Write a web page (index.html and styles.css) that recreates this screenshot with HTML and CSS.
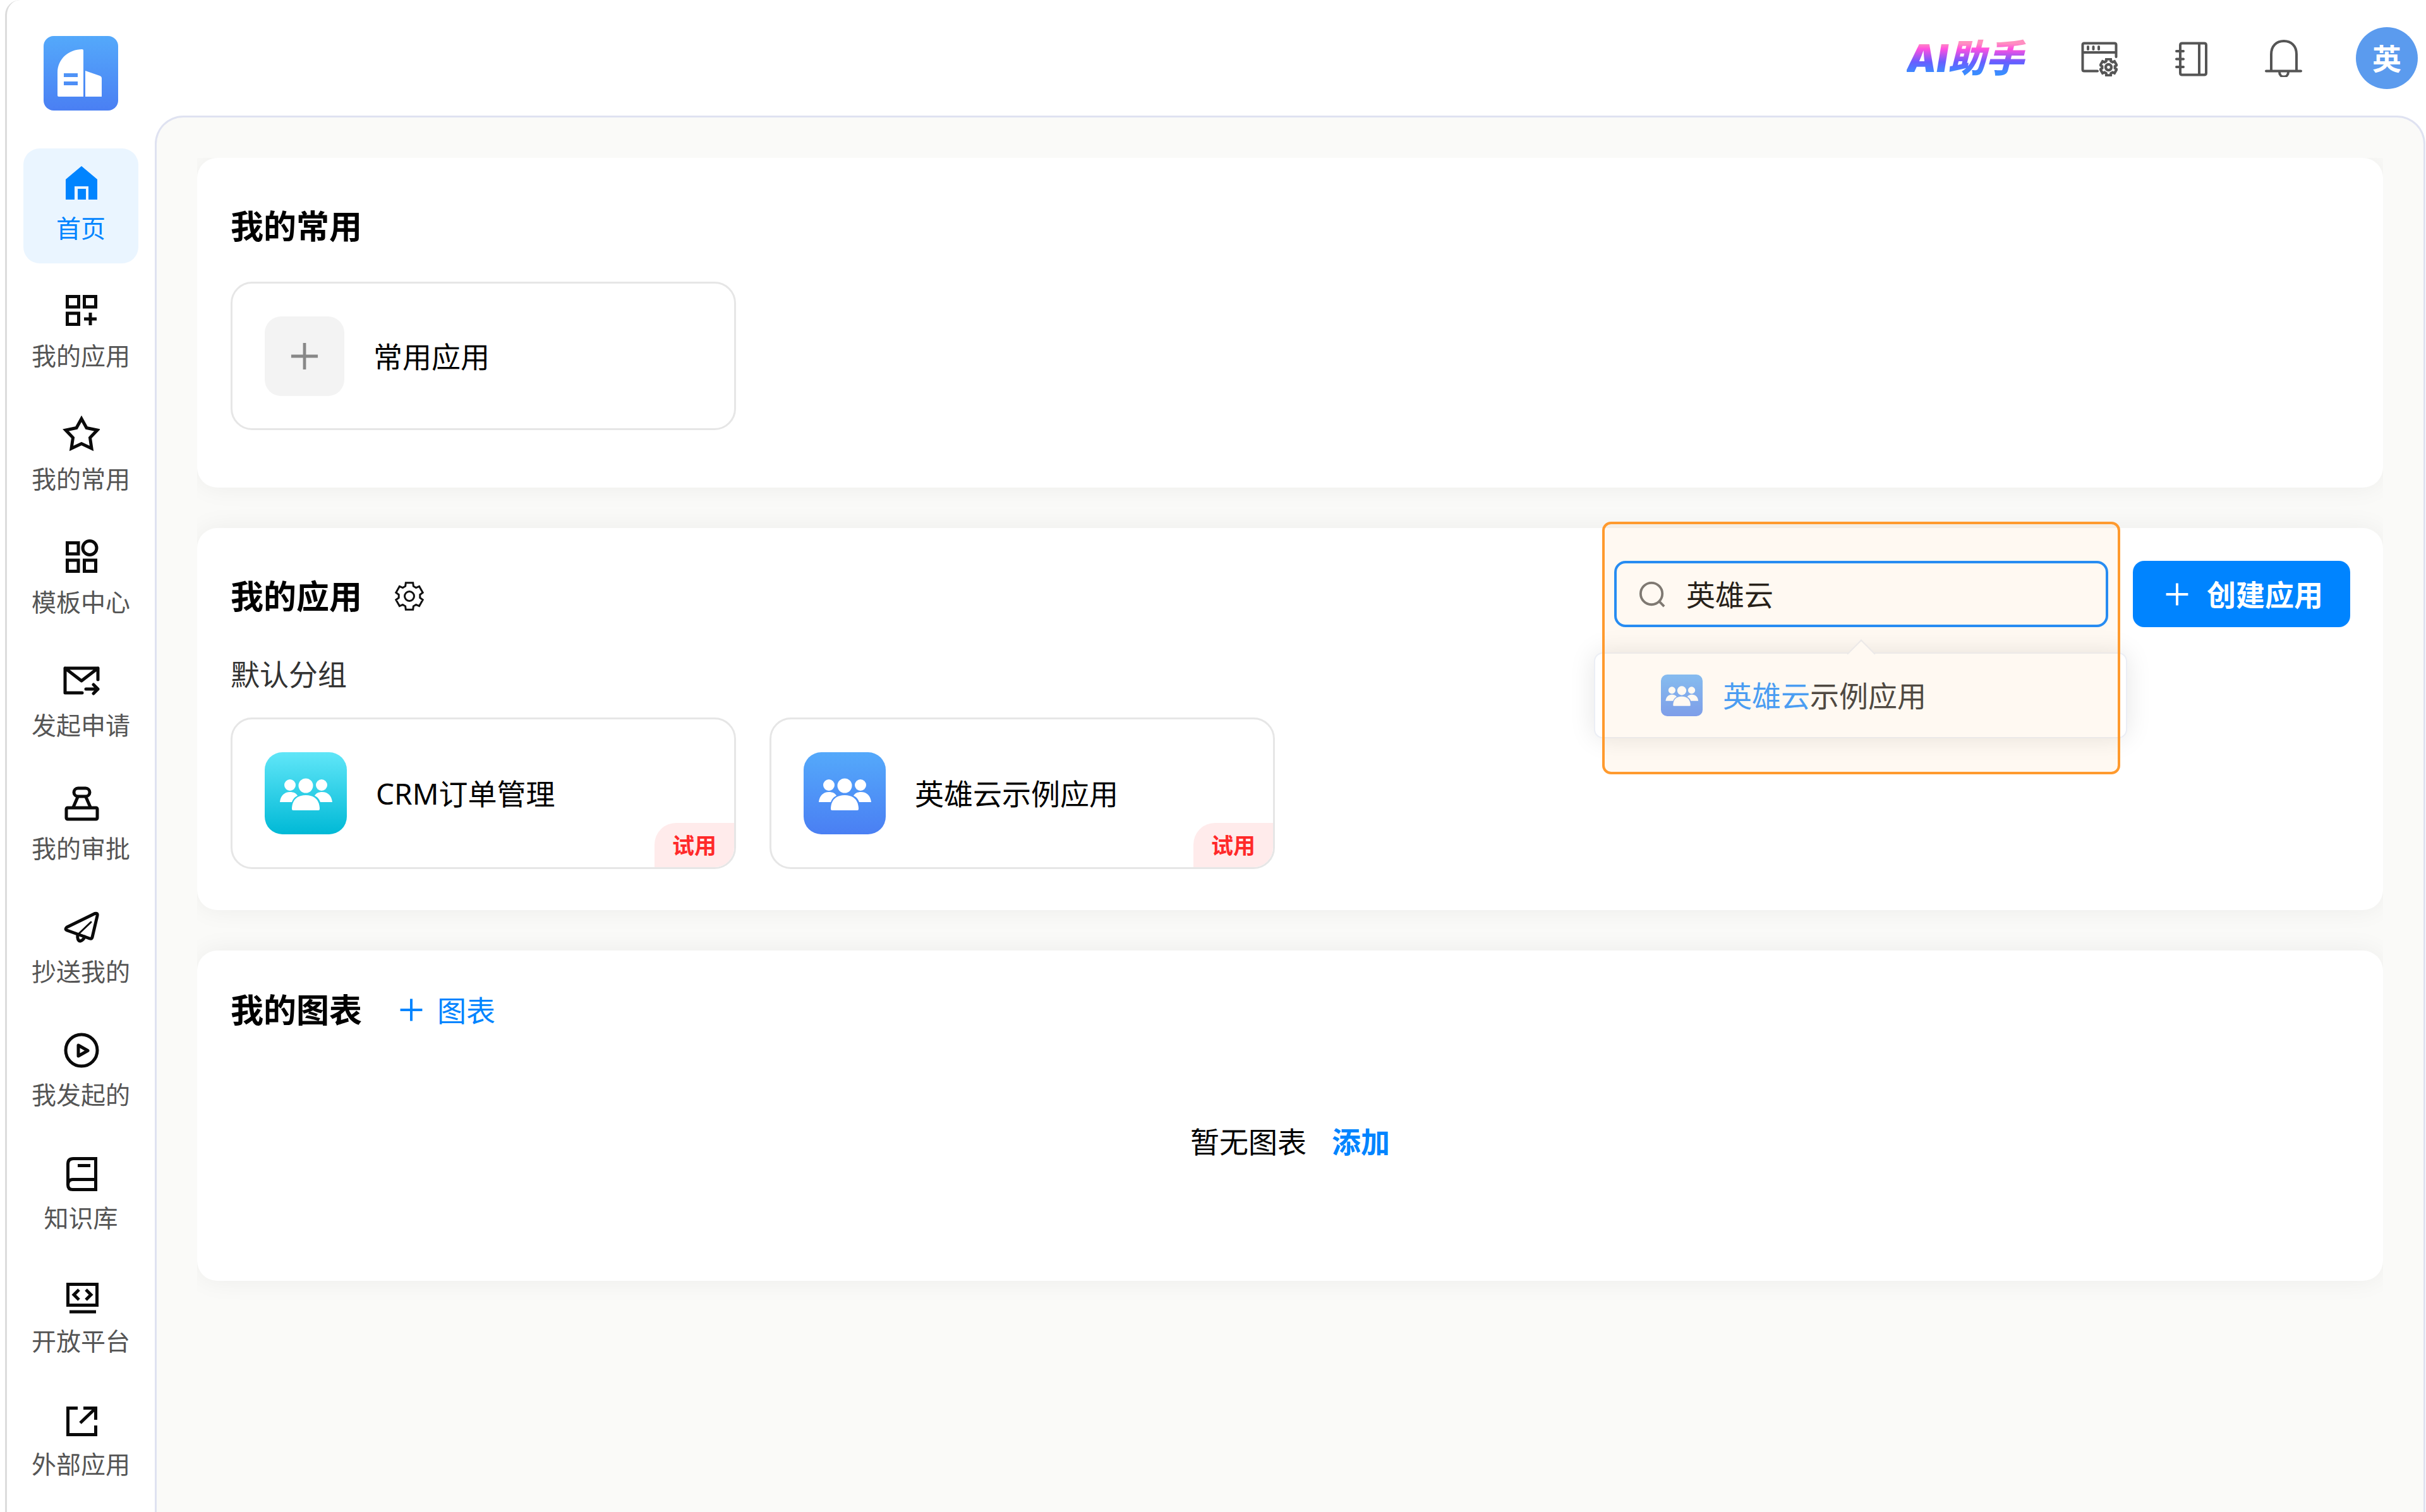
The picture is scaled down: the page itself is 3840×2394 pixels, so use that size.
FILE: index.html
```html
<!DOCTYPE html>
<html lang="zh-CN">
<head>
<meta charset="utf-8">
<meta name="viewport" content="width=device-width, initial-scale=1">
<title>首页</title>
<link rel="stylesheet" href="styles.css">
</head>
<body>
<svg class="sprite" aria-hidden="true">
  <defs>
    <symbol id="gear" viewBox="0 0 48 48">
      <path d="M17.6 8.2 18.3 2.8H29.7L30.4 8.2 34.5 10.6 39.6 8.4 45.2 18.3 40.8 21.6V26.4L45.2 29.7 39.6 39.6 34.5 37.4 30.4 39.8 29.7 45.2H18.3L17.6 39.8 13.5 37.4 8.4 39.6 2.8 29.7 7.2 26.4V21.6L2.8 18.3 8.4 8.4 13.5 10.6Z"/>
      <circle cx="24" cy="24" r="7.5"/>
    </symbol>
    <symbol id="users" viewBox="0 0 130 130">
      <circle cx="40" cy="52" r="9"/>
      <circle cx="90" cy="52" r="9"/>
      <circle cx="65" cy="53" r="11.5"/>
      <path d="M24 79C25 69 31 63 40 63C46 63 50 65 52 69C47 71 45 74 43 79Z"/>
      <path d="M107 79C106 69 100 63 91 63C85 63 81 65 79 69C84 71 86 74 88 79Z"/>
      <path d="M43 90C43 77 50 68 65 68C80 68 87 77 87 90Q87 92 85 92H45Q43 92 43 90Z"/>
    </symbol>
    <symbol id="plus" viewBox="0 0 48 48">
      <path d="M24 2V46M2 24H46"/>
    </symbol>
  </defs>
</svg>

<div class="app">
  <aside class="sidebar">
    <a class="logo" href="#" aria-label="英雄云">
      <svg viewBox="0 0 118 118" fill="#fff">
        <path fill-rule="evenodd" d="M22 94V58C22 36 40 21 61 21Q63 21 63 23V96H24Q22 96 22 94ZM32 59V65H54V59ZM32 72V78H54V72Z"/>
        <path d="M66 55 89 63Q92 64 92 67V96H66Z"/>
      </svg>
    </a>
    <nav class="nav">
      <a class="nav-item active" href="#">
        <svg class="nav-icon solid" viewBox="0 0 60 60"><path d="M31 4 56 25V57H42V36H20V57H6V25Z"/><path d="M25 40H38V57H25Z"/></svg>
        <span>首页</span>
      </a>
      <a class="nav-item" href="#">
        <svg class="nav-icon" viewBox="0 0 60 60"><path d="M8.500 8.500H26.500V25H8.500ZM35.500 8.500H53.500V25H35.500ZM8.500 35H26.500V52.500H8.500ZM45 34V54M35 44H55"/></svg>
        <span>我的应用</span>
      </a>
      <a class="nav-item" href="#">
        <svg class="nav-icon" viewBox="0 0 60 60"><path d="M31 7 39 21.500 56 25 44.500 37 47 54 31 46.500 15 54 17.500 37 6 25 23 21.500Z"/></svg>
        <span>我的常用</span>
      </a>
      <a class="nav-item" href="#">
        <svg class="nav-icon" viewBox="0 0 60 60"><path d="M8.500 8.500H26V26H8.500ZM8.500 36H26V53.500H8.500ZM35.500 36H53.500V53.500H35.500Z"/><circle cx="44" cy="16.500" r="11"/></svg>
        <span>模板中心</span>
      </a>
      <a class="nav-item" href="#">
        <svg class="nav-icon round" viewBox="0 0 60 60"><path d="M57 30V12H5V51H32M5 12 31 32 57 12M38 45H57M50 38 57 45 50 52"/></svg>
        <span>发起申请</span>
      </a>
      <a class="nav-item" href="#">
        <svg class="nav-icon round" viewBox="0 0 60 60"><rect x="19" y="7" width="25" height="13" rx="6.500"/><path d="M25 21 18 37M38 21 45 37"/><rect x="7" y="38" width="49" height="18" rx="2"/></svg>
        <span>我的审批</span>
      </a>
      <a class="nav-item" href="#">
        <svg class="nav-icon round" viewBox="0 0 60 60"><path d="M52 10.500 8 32Q4 35 8 37L44 50Q47 51 48 48L56 14Q57 9 52 10.500Z"/><path d="M25 44C24 50 26 54 29 54C33 53 35 50 36 47"/><path class="thin" d="M26 43 46 24"/></svg>
        <span>抄送我的</span>
      </a>
      <a class="nav-item" href="#">
        <svg class="nav-icon" viewBox="0 0 60 60"><circle cx="31" cy="32" r="25"/><path stroke-linejoin="round" d="M26 24V41L41 32.500Z"/></svg>
        <span>我发起的</span>
      </a>
      <a class="nav-item" href="#">
        <svg class="nav-icon" viewBox="0 0 60 60"><path d="M9.500 50V17Q9.500 8.500 18 8.500H53.500V57.500H17Q9.500 57.500 9.500 50Q9.500 41.500 17 41.500H53.500M25 19.500H45"/></svg>
        <span>知识库</span>
      </a>
      <a class="nav-item" href="#">
        <svg class="nav-icon" viewBox="0 0 60 60"><path d="M9.500 12.500H55.500V45.500H9.500ZM12 56H54M27 21 19 29 27 37M38 21 46 29 38 37"/></svg>
        <span>开放平台</span>
      </a>
      <a class="nav-item" href="#">
        <svg class="nav-icon" viewBox="0 0 60 60"><path d="M25 13.500H9.500V55.500H53.500V41M34 13.500H53.500V32M29 37 53 14"/></svg>
        <span>外部应用</span>
      </a>
    </nav>
  </aside>

  <div class="main">
    <header class="topbar">
      <a class="assistant" href="#">AI助手</a>
      <button class="tool" type="button" aria-label="窗口设置">
        <svg viewBox="0 0 60 60"><path d="M26 50.500H5Q2.500 50.500 2.500 48V9Q2.500 6.500 5 6.500H53Q55.500 6.500 55.500 9V28M2.500 21H55.500M11 12V16M19.500 12V16M28 12V16"/><use class="tool-gear" href="#gear" x="29" y="30" width="29" height="29"/></svg>
      </button>
      <button class="tool" type="button" aria-label="通讯录">
        <svg viewBox="0 0 60 60"><path d="M15 6.500H50Q53 6.500 53 9.500V53.500Q53 56.500 50 56.500H15Q12 56.500 12 53.500V9.500Q12 6.500 15 6.500ZM42 6.500V56.500M6 19H17M6 31.500H17M6 44H17"/></svg>
      </button>
      <button class="tool" type="button" aria-label="通知">
        <svg viewBox="0 0 60 60"><path d="M11 50V24C11 11 19 3 31 3S51 11 51 24V50M3 50.500H58M24 52C24 62 38 62 38 52"/></svg>
      </button>
      <button class="avatar" type="button">英</button>
    </header>

    <main class="panel">
      <div class="cards">
        <section class="card card-favorites">
          <h2 class="card-title">我的常用</h2>
          <div class="tiles">
            <button class="tile tile-add" type="button">
              <span class="add-box"><svg viewBox="0 0 48 48"><use href="#plus"/></svg></span>
              <span>常用应用</span>
            </button>
          </div>
        </section>

        <section class="card card-apps">
          <div class="card-head">
            <h2 class="card-title">我的应用</h2>
            <button class="settings" type="button" aria-label="应用设置"><svg viewBox="0 0 48 48"><use href="#gear"/></svg></button>
            <div class="search">
              <div class="search-box">
                <svg viewBox="0 0 44 44" aria-hidden="true"><circle cx="21" cy="21" r="18"/><path d="M34 34 42 42"/></svg>
                <input type="text" value="英雄云" aria-label="搜索应用">
              </div>
              <div class="dropdown">
                <a class="option" href="#">
                  <span class="app-icon blue small"><svg viewBox="12 12 106 106"><use href="#users" width="130" height="130"/></svg></span>
                  <span><mark>英雄云</mark>示例应用</span>
                </a>
              </div>
              <div class="highlight"></div>
            </div>
            <button class="create" type="button"><svg viewBox="0 0 48 48"><use href="#plus"/></svg>创建应用</button>
          </div>
          <h3 class="group">默认分组</h3>
          <div class="tiles">
            <a class="tile" href="#">
              <span class="app-icon teal"><svg viewBox="0 0 130 130"><use href="#users"/></svg></span>
              <span>CRM订单管理</span>
              <span class="tag">试用</span>
            </a>
            <a class="tile" href="#">
              <span class="app-icon blue"><svg viewBox="0 0 130 130"><use href="#users"/></svg></span>
              <span>英雄云示例应用</span>
              <span class="tag">试用</span>
            </a>
          </div>
        </section>

        <section class="card card-charts">
          <div class="chart-head">
            <h2 class="card-title">我的图表</h2>
            <button class="add-chart" type="button"><svg viewBox="0 0 48 48"><use href="#plus"/></svg>图表</button>
          </div>
          <p class="empty">暂无图表<a href="#">添加</a></p>
        </section>
      </div>
    </main>
  </div>
</div>
</body>
</html>
```
FILE: styles.css
```css
* {
  box-sizing: border-box;
}

body {
  margin: 0;
  background: #fff;
  color: #000;
  font-family: "Noto Sans", "Noto Sans CJK SC", sans-serif;
  font-size: 46px;
  line-height: 60px;
}

h2, h3, p {
  margin: 0;
  font-weight: 400;
}

a {
  color: inherit;
  text-decoration: none;
}

button {
  padding: 0;
  border: 0;
  background: none;
  color: inherit;
  font: inherit;
  cursor: pointer;
}

svg {
  display: block;
}

.sprite {
  position: absolute;
  width: 0;
  height: 0;
}

.app {
  display: flex;
  min-height: 100vh;
  margin-left: 8px;
  border-left: 3px solid #dcdcdc;
  border-radius: 24px 0 0 0;
}

/* Sidebar */

.sidebar {
  display: flex;
  flex: none;
  flex-direction: column;
  align-items: center;
  gap: 60px;
  width: 234px;
  padding-top: 57px;
}

.logo {
  width: 118px;
  height: 118px;
  border-radius: 16px;
  background: linear-gradient(#54a9fb, #4a7ff3);
}

.nav {
  display: flex;
  flex-direction: column;
  gap: 13px;
}

.nav-item {
  display: flex;
  flex-direction: column;
  align-items: center;
  gap: 16px;
  width: 182px;
  height: 182px;
  padding-top: 24px;
  border-radius: 26px;
  color: #555;
  font-size: 39px;
  line-height: 52px;
}

.nav-item.active {
  margin-bottom: 7px;
  background: #eaf5ff;
  color: #0084ff;
}

.nav-icon {
  width: 60px;
  height: 60px;
  fill: none;
  stroke: #0a0a0a;
  stroke-width: 5;
}

.nav-icon.round {
  stroke-linecap: round;
  stroke-linejoin: round;
}

.nav-icon.solid {
  fill: currentColor;
  stroke: none;
}

.nav-icon .thin {
  stroke-width: 3;
}

/* Top bar */

.main {
  display: flex;
  flex: 1;
  flex-direction: column;
  min-width: 0;
}

.topbar {
  display: flex;
  align-items: center;
  justify-content: flex-end;
  gap: 85px;
  height: 183px;
  padding-right: 13px;
}

.assistant {
  padding-right: 6px;
  background: linear-gradient(#ff8fc0 18%, #ff4fe0 30%, #6a5cff 58%, #3a8cff 82%);
  background-clip: text;
  -webkit-background-clip: text;
  color: transparent;
  font-family: Inter, "Noto Sans CJK SC", sans-serif;
  font-size: 60px;
  font-style: italic;
  font-weight: 900;
  line-height: 72px;
}

.tool svg {
  width: 60px;
  height: 60px;
  fill: none;
  stroke: #555;
  stroke-width: 4;
  stroke-linecap: round;
}

.tool .tool-gear {
  stroke-width: 7;
}

.avatar {
  width: 98px;
  height: 98px;
  border-radius: 50%;
  background: #5b9bee;
  color: #fff;
  font-weight: 700;
}

/* Content */

.panel {
  flex: 1;
  margin-right: 1px;
  padding: 64px 64px 0;
  border: 3px solid #dfe2f1;
  border-bottom: 0;
  border-radius: 45px 45px 0 0;
  background: #fafaf8;
}

.cards {
  display: flex;
  flex-direction: column;
  gap: 64px;
  padding-bottom: 64px;
  overflow: hidden;
}

.card {
  border-radius: 32px;
  background: #fff;
  box-shadow: 0 0 40px rgba(0, 0, 0, 0.06);
}

.card-favorites {
  padding: 76px 53px 91px;
}

.card-favorites .tiles {
  margin-top: 56px;
}

.card-apps {
  padding: 52px 52px 65px 53px;
}

.card-charts {
  padding: 62px 53px 189px;
}

.card-title {
  font-size: 52px;
  font-weight: 700;
  line-height: 64px;
}

.card-head {
  display: flex;
  align-items: center;
  height: 105px;
}

.card-head .card-title {
  padding-top: 6px;
}

.settings {
  margin: 0 auto 0 51px;
  padding-top: 6px;
}

.settings svg {
  width: 48px;
  height: 48px;
  fill: none;
  stroke: #111;
  stroke-width: 3;
}

.search {
  position: relative;
  width: 782px;
  height: 105px;
  margin-right: 39px;
}

.search-box {
  display: flex;
  align-items: center;
  gap: 33px;
  height: 105px;
  padding: 0 35px;
  border: 4px solid #1a8cff;
  border-radius: 18px;
}

.search-box svg {
  flex: none;
  width: 42px;
  height: 42px;
  fill: none;
  stroke: #777;
  stroke-width: 4;
}

.search-box input {
  flex: 1;
  min-width: 0;
  height: 60px;
  padding: 0;
  border: 0;
  outline: 0;
  background: transparent;
  color: #1a1a1a;
  font: inherit;
}

.dropdown {
  position: absolute;
  top: 145px;
  left: -32px;
  width: 844px;
  padding: 34px 0;
  border: 2px solid #ebeef5;
  border-radius: 14px;
  background: #fff;
  box-shadow: 0 0 40px rgba(0, 0, 0, 0.1);
}

.dropdown::before {
  position: absolute;
  top: -16px;
  left: 50%;
  width: 30px;
  height: 30px;
  margin-left: -15px;
  border: solid #ebeef5;
  border-width: 2px 0 0 2px;
  background: linear-gradient(135deg, #fff 50%, transparent 50%);
  content: "";
  transform: rotate(45deg);
}

.option {
  display: flex;
  align-items: center;
  gap: 32px;
  height: 64px;
  padding-left: 104px;
  color: #444;
}

.option mark {
  background: none;
  color: #409eff;
}

/* Tinted frame that calls out the search area */
.highlight {
  position: absolute;
  top: -62px;
  left: -19px;
  width: 820px;
  height: 400px;
  border: 4px solid #ff9a2e;
  border-radius: 14px;
  background: rgba(255, 150, 40, 0.06);
  pointer-events: none;
}

.create {
  display: flex;
  align-items: center;
  justify-content: center;
  gap: 28px;
  width: 344px;
  height: 105px;
  padding-left: 8px;
  border-radius: 18px;
  background: #0084ff;
  color: #fff;
  font-weight: 700;
}

.create svg,
.add-chart svg {
  width: 38px;
  height: 38px;
  stroke: currentColor;
  stroke-width: 5;
}

.group {
  margin: 44px 0 39px;
  color: #333;
  font-size: 46px;
}

.tiles {
  display: flex;
  flex-wrap: wrap;
  gap: 53px;
}

.tile {
  position: relative;
  display: flex;
  align-items: center;
  gap: 46px;
  width: 800px;
  height: 240px;
  padding-left: 51px;
  overflow: hidden;
  border: 3px solid #e6e6e6;
  border-radius: 34px;
}

.tile-add {
  height: 235px;
}

.add-box {
  display: flex;
  align-items: center;
  justify-content: center;
  width: 126px;
  height: 126px;
  border-radius: 26px;
  background: #f3f3f3;
}

.add-box svg {
  width: 46px;
  height: 46px;
  stroke: #888;
  stroke-width: 5;
}

.app-icon {
  width: 130px;
  height: 130px;
  border-radius: 28px;
  fill: #fff;
}

.app-icon.blue {
  background: linear-gradient(#54a9fb, #4a7ff3);
}

.app-icon.teal {
  background: linear-gradient(#60e6f8, #00b9d6);
}

.app-icon.small {
  width: 66px;
  height: 66px;
  border-radius: 10px;
  opacity: 0.75;
}

.tag {
  position: absolute;
  right: 0;
  bottom: 0;
  padding: 10px 28px 8px;
  border-radius: 34px 0 0 0;
  background: #ffebeb;
  color: #ff2a2a;
  font-size: 35px;
  font-weight: 700;
  line-height: 52px;
}

.chart-head {
  display: flex;
  align-items: center;
  gap: 59px;
}

.add-chart {
  display: flex;
  align-items: center;
  gap: 22px;
  color: #0084ff;
}

.empty {
  display: flex;
  justify-content: center;
  gap: 40px;
  margin-top: 146px;
  padding-bottom: 2px;
}

.empty a {
  color: #0084ff;
  font-weight: 700;
}
```
